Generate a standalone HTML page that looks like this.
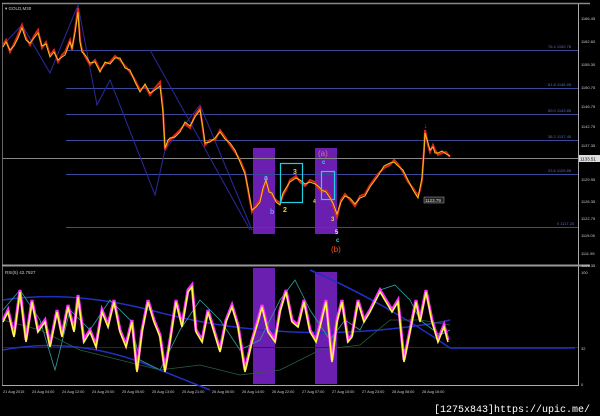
<!DOCTYPE html>
<html><head><meta charset="utf-8"><style>
html,body{margin:0;padding:0;background:#000;width:600px;height:416px;overflow:hidden}
svg{display:block;font-family:"Liberation Sans",sans-serif}
</style></head><body>
<svg width="600" height="416" viewBox="0 0 600 416" xmlns="http://www.w3.org/2000/svg">
<rect width="600" height="416" fill="#000"/>
<line x1="2" y1="3.5" x2="590" y2="3.5" stroke="#888" stroke-width="1.5"/>
<line x1="2.5" y1="4" x2="2.5" y2="386" stroke="#666"/>
<line x1="578.5" y1="4" x2="578.5" y2="386" stroke="#aaa"/>
<line x1="2" y1="265.5" x2="590" y2="265.5" stroke="#999" stroke-width="2"/>
<line x1="2" y1="385.5" x2="578" y2="385.5" stroke="#aaa"/>
<text x="5" y="10" fill="#ccc" font-size="4.5">▾ GOLD,M30</text>
<rect x="253" y="148" width="22" height="86" fill="#6a1fb0"/>
<rect x="315" y="148" width="22" height="86" fill="#6a1fb0"/>
<rect x="253" y="268" width="22" height="116" fill="#6a1fb0"/>
<rect x="315" y="272" width="22" height="112" fill="#6a1fb0"/>
<g stroke="#3a4a9a" stroke-width="1">
<line x1="66" y1="50.5" x2="578" y2="50.5"/>
<line x1="66" y1="88.5" x2="578" y2="88.5"/>
<line x1="66" y1="114.5" x2="578" y2="114.5"/>
<line x1="66" y1="140.5" x2="578" y2="140.5"/>
<line x1="66" y1="174.5" x2="578" y2="174.5"/>
<line x1="66" y1="227.5" x2="578" y2="227.5"/>
</g>
<line x1="3" y1="158.5" x2="578" y2="158.5" stroke="#888"/>
<g fill="#5a6ac8" font-size="4">
<text x="548" y="48">76.4 1150.78</text>
<text x="548" y="86">61.8 1146.95</text>
<text x="548" y="112">50.0 1143.85</text>
<text x="548" y="138">38.2 1137.45</text>
<text x="548" y="172">23.6 1129.85</text>
<text x="557" y="225">0 1117.20</text>
</g>
<polyline fill="none" stroke="#2a2aa0" stroke-width="1" points="3,45 22,25 50,73 78,5 97,105 110,80 155,195 165,150 200,105 252,230"/>
<polyline fill="none" stroke="#2a2aa0" stroke-width="1" points="150,50 250,230"/>
<polyline fill="none" stroke="#d82818" stroke-width="2" points="3,45 6,40 10,52 14,44 18,35 22,25 26,38 30,45 34,36 38,30 42,48 46,42 50,55 54,50 58,62 62,55 65,52 70,40 72,50 75,30 78,8 80,40 82,50 86,58 90,65 95,60 100,70 105,64 110,62 115,56 120,60 125,66 130,72 135,80 140,90 145,86 150,95 155,88 160,82 163,110 165,150 168,142 170,140 175,135 180,130 185,124 190,128 195,115 200,108 203,130 205,145 210,140 215,140 220,130 225,137 230,145 235,152 240,160 245,172 248,190 252,212 256,205 260,200 263,190 266,182 269,190 272,195 276,200 280,203 283,195 286,190 290,180 296,176 300,182 305,186 310,180 315,182 318,188 322,192 326,190 330,196 333,205 337,217 341,200 345,194 350,200 355,206 360,196 365,194 370,185 378,174 384,168 390,165 394,160 398,164 403,172 408,182 413,188 418,196 420,190 422,180 424,150 425,130 428,145 430,152 433,145 435,150 438,155 442,153 446,152 450,157"/>
<polyline fill="none" stroke="#f5c020" stroke-width="1" points="3,47 6,42 10,50 14,46 18,38 22,28 26,40 30,43 34,38 38,33 42,46 46,44 50,57 54,52 58,60 62,57 65,55 70,42 72,48 75,33 78,12 80,42 82,52 86,56 90,63 95,62 100,72 105,62 110,64 115,58 120,58 125,68 130,70 135,82 140,92 145,84 150,93 155,90 160,86 163,112 165,148 168,140 170,138 175,137 180,132 185,122 190,126 195,117 200,110 203,128 205,143 210,142 215,138 220,132 225,139 230,143 235,150 240,162 245,174 248,188 252,210 256,207 260,202 263,188 266,180 269,192 272,193 276,202 280,205 283,193 286,188 290,182 296,178 300,180 305,184 310,182 315,184 318,186 322,190 326,192 330,198 333,203 337,214 341,202 345,196 350,198 355,204 360,198 365,196 370,187 378,176 384,166 390,163 394,162 398,166 403,170 408,180 413,190 418,198 420,188 422,178 424,152 425,133 428,143 430,150 433,147 435,153 438,153 442,151 446,154 450,156"/>
<rect x="280.5" y="163.5" width="22" height="39" fill="none" stroke="#20d0e0" stroke-width="1.2"/>
<rect x="321.5" y="171.5" width="13" height="28" fill="none" stroke="#20d0e0" stroke-width="1.2"/>
<g font-size="7" font-weight="bold">
<text x="264" y="180" fill="#8ab0ff">a</text>
<text x="270" y="214" fill="#60a0ff">b</text>
<text x="293" y="174" fill="#f0d020">3</text>
<text x="283" y="212" fill="#f0d020">2</text>
<text x="313" y="203" fill="#f0d020" font-size="5">4</text>
<text x="318" y="156" fill="#e07080" font-size="8" font-weight="normal">(a)</text>
<text x="322" y="164" fill="#30d0e0" font-size="6">c</text>
<text x="331" y="221" fill="#f0d020" font-size="6">3</text>
<text x="335" y="234" fill="#eee" font-size="6">5</text>
<text x="336" y="242" fill="#30d0e0" font-size="6">c</text>
<text x="331" y="252" fill="#f05020" font-size="8" font-weight="normal">(b)</text>
</g>
<text x="424" y="128" fill="#4060ff" font-size="7">↓</text>
<rect x="424" y="197" width="20" height="6" fill="#222" stroke="#aaa" stroke-width="0.5"/>
<text x="425" y="202" fill="#ddd" font-size="4.5">1123.79</text>
<g fill="#ccc" font-size="4">
<text x="581" y="20">1166.45</text>
<text x="581" y="43">1162.60</text>
<text x="581" y="66">1155.30</text>
<text x="581" y="89">1150.75</text>
<text x="581" y="108">1146.75</text>
<text x="581" y="128">1142.75</text>
<text x="581" y="147">1137.35</text>
<text x="581" y="181">1129.95</text>
<text x="581" y="203">1126.35</text>
<text x="581" y="220">1122.75</text>
<text x="581" y="237">1119.05</text>
<text x="581" y="255">1111.95</text>
<text x="581" y="267">1108.35</text>
<text x="581" y="274">100</text>
<text x="581" y="350">32</text>
<text x="581" y="386">0</text>
</g>
<rect x="579" y="155" width="21" height="7" fill="#ddd"/>
<text x="580" y="160.5" fill="#000" font-size="4.5">1133.51</text>
<text x="5" y="274" fill="#ccc" font-size="4.5">RSI(5) 42.7927</text>
<line x1="3" y1="347.5" x2="578" y2="347.5" stroke="#1a2070" stroke-width="1"/>
<path d="M3,300 Q70,290 150,310 Q260,340 380,330 Q430,325 450,320" fill="none" stroke="#2030c0" stroke-width="1.5"/>
<path d="M3,350 Q80,335 160,370 L210,390" fill="none" stroke="#2030c0" stroke-width="1.5"/>
<path d="M310,270 Q380,300 450,348 L575,348" fill="none" stroke="#2030c0" stroke-width="1.5"/>
<polyline fill="none" stroke="#30a0a0" stroke-width="0.8" points="3,310 20,290 40,320 55,370 70,310 90,330 110,300 130,320 140,360 160,370 180,330 200,300 220,320 240,350 260,340 280,300 295,280 310,310 330,340 345,320 360,330 380,290 395,285 410,300 420,320 440,335 450,330"/>
<polyline fill="none" stroke="#2a6040" stroke-width="0.8" points="3,320 40,330 80,350 120,360 160,370 200,365 240,375 280,370 320,350 360,345 390,320 420,320 450,325"/>
<polyline fill="none" stroke="#ff30ff" stroke-width="3" points="3,320 8,310 14,335 20,290 26,340 32,300 38,330 45,320 50,345 57,310 62,335 68,305 74,330 78,295 84,340 90,330 96,345 102,310 108,325 114,300 120,330 126,345 132,320 137,370 142,330 148,300 154,320 160,335 165,370 170,340 176,300 182,325 188,290 192,285 196,330 202,340 208,310 214,330 220,350 226,320 232,305 238,325 245,370 252,340 258,320 262,305 268,330 275,340 280,310 286,290 292,320 298,325 304,300 310,330 316,340 320,325 326,300 332,360 337,320 342,300 348,340 352,335 358,300 364,320 370,310 375,300 380,290 386,300 392,310 398,300 404,360 410,330 416,300 420,320 426,290 432,320 438,340 444,325 448,340"/>
<polyline fill="none" stroke="#ffff40" stroke-width="1.5" points="3,322 8,312 14,337 20,292 26,342 32,302 38,332 45,322 50,347 57,312 62,337 68,307 74,332 78,297 84,342 90,332 96,347 102,312 108,327 114,302 120,332 126,347 132,322 137,372 142,332 148,302 154,322 160,337 165,372 170,342 176,302 182,327 188,292 192,287 196,332 202,342 208,312 214,332 220,352 226,322 232,307 238,327 245,372 252,342 258,322 262,307 268,332 275,342 280,312 286,292 292,322 298,327 304,302 310,332 316,342 320,327 326,302 332,362 337,322 342,302 348,342 352,337 358,302 364,322 370,312 375,302 380,292 386,302 392,312 398,302 404,362 410,332 416,302 420,322 426,292 432,322 438,342 444,327 448,342"/>
<g fill="#ccc" font-size="3.8">
<text x="3" y="393">21 Aug 2015</text>
<text x="32" y="393">24 Aug 04:00</text>
<text x="62" y="393">24 Aug 12:00</text>
<text x="92" y="393">24 Aug 20:00</text>
<text x="122" y="393">25 Aug 05:00</text>
<text x="152" y="393">25 Aug 13:00</text>
<text x="182" y="393">25 Aug 21:00</text>
<text x="212" y="393">26 Aug 06:00</text>
<text x="242" y="393">26 Aug 14:00</text>
<text x="272" y="393">26 Aug 22:00</text>
<text x="302" y="393">27 Aug 07:00</text>
<text x="332" y="393">27 Aug 15:00</text>
<text x="362" y="393">27 Aug 23:00</text>
<text x="392" y="393">28 Aug 08:00</text>
<text x="422" y="393">28 Aug 16:00</text>
</g>
<text x="434" y="412" fill="#fff" font-size="10" font-family="Liberation Mono,monospace">[1275x843]https://upic.me/</text>
</svg>
</body></html>
